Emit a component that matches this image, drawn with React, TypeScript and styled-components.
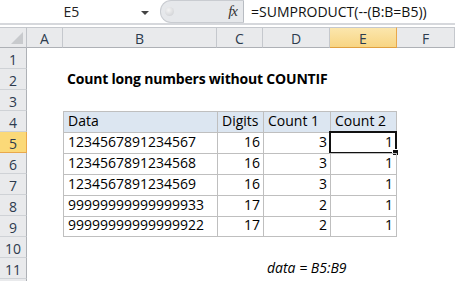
import React from 'react';
import styled, { createGlobalStyle } from 'styled-components';

const GlobalStyle = createGlobalStyle`
	html, body {
		margin: 0;
		padding: 0;
		background: #fff;
	}
	body {
		font-family: 'Open Sans', 'Liberation Sans', sans-serif;
		width: 455px;
		height: 281px;
		overflow: hidden;
	}
`;

const Window = styled.div`
	width: 455px;
	height: 281px;
	display: flex;
	flex-direction: column;
	overflow: hidden;
	background: #fff;
`;

const FormulaBar = styled.div`
	display: flex;
	height: 23px;
	border-bottom: 2px solid #d6d8dc;
	margin-bottom: 2px;
	flex-shrink: 0;
`;

const NameBox = styled.div`
	width: 160px;
	display: flex;
	align-items: center;
	font-size: 14px;
	color: #222;
	padding-right: 4px;
	box-sizing: border-box;
`;

const NameText = styled.span`
	flex: 1;
	text-align: center;
	padding-left: 2px;
`;

const DropArrow = styled.span`
	width: 0;
	height: 0;
	border-left: 4px solid transparent;
	border-right: 4px solid transparent;
	border-top: 4px solid #444;
	margin-right: 7px;
	margin-top: 2px;
`;

const FxPanel = styled.div`
	width: 84px;
	display: flex;
	align-items: center;
	justify-content: space-between;
	background: #e6e8eb;
	border: 1px solid #c9ccd1;
	border-right-color: #b8bcc2;
	border-radius: 11px 0 0 11px;
	box-sizing: border-box;
	padding: 0 6px 0 4px;
`;

const Grip = styled.span`
	width: 9px;
	height: 9px;
	border-radius: 50%;
	background: radial-gradient(circle at 40% 35%, #f4f4f4, #c9cbcf);
`;

const Fx = styled.span`
	font-family: 'Liberation Serif', serif;
	font-style: italic;
	font-size: 15px;
	color: #333;
	letter-spacing: -1px;
`;

const FormulaInput = styled.div`
	flex: 1;
	display: flex;
	align-items: center;
	padding-left: 7px;
	font-size: 14px;
	color: #111;
	white-space: nowrap;
`;

const Sheet = styled.div`
	display: grid;
	grid-template-columns: 27px 36px 154px 46px 67px 67px 1fr;
	grid-auto-rows: 21px;
	font-size: 14px;
	color: #000;
`;

const Corner = styled.div`
	background: #e9eaec;
	border-top: 1px solid #c5c8cd;
	border-right: 1px solid #bfc2c7;
	border-bottom: 1px solid #aeb1b6;
	box-sizing: border-box;
	position: relative;
	overflow: hidden;

	&::after {
		content: '';
		position: absolute;
		right: 3px;
		bottom: 3px;
		width: 0;
		height: 0;
		border-left: 12px solid transparent;
		border-bottom: 12px solid #c8cacd;
	}
`;

const ColHeader = styled.div<{ $active?: boolean }>`
	display: flex;
	align-items: center;
	justify-content: center;
	box-sizing: border-box;
	border-top: 1px solid #c5c8cd;
	border-right: 1px solid ${(p) => (p.$active ? '#e9a84c' : '#c5c8cd')};
	border-bottom: 1px solid ${(p) => (p.$active ? '#e0a040' : '#aeb1b6')};
	background: ${(p) => (p.$active ? 'linear-gradient(#fbe6ad, #f8d583)' : '#e9eaec')};
	color: #2d3b4e;
	font-size: 14px;
	padding-top: 2px;
`;

const RowHeader = styled.div<{ $active?: boolean }>`
	display: flex;
	align-items: center;
	justify-content: center;
	box-sizing: border-box;
	border-right: 1px solid ${(p) => (p.$active ? '#e9a84c' : '#aeb1b6')};
	border-bottom: 1px solid ${(p) => (p.$active ? '#e9a84c' : '#cfd2d6')};
	background: ${(p) => (p.$active ? '#fbd978' : '#e9eaec')};
	color: #2d3b4e;
	font-size: 14px;
	padding-top: 2px;
`;

const Cell = styled.div<{
	$align?: 'left' | 'right';
	$bold?: boolean;
	$italic?: boolean;
	$head?: boolean;
	$boxed?: boolean;
	$last?: boolean;
	$end?: boolean;
}>`
	position: relative;
	box-sizing: border-box;
	display: flex;
	align-items: flex-end;
	justify-content: ${(p) => (p.$align === 'right' ? 'flex-end' : 'flex-start')};
	padding: 0 3px 2px 4px;
	white-space: nowrap;
	overflow: visible;
	font-weight: ${(p) => (p.$bold ? 700 : 400)};
	font-style: ${(p) => (p.$italic ? 'italic' : 'normal')};
	letter-spacing: ${(p) => (p.$bold ? '-0.2px' : 'normal')};
	background: ${(p) => (p.$head ? '#dce6f1' : 'transparent')};
	${(p) =>
		p.$boxed
			? `border-left: 1px solid #bfbfbf; border-top: 1px solid #bfbfbf;`
			: ''}
	${(p) => (p.$last ? 'border-bottom: 1px solid #bfbfbf;' : '')}
	${(p) => (p.$end ? 'border-right: 1px solid #bfbfbf;' : '')}
`;

const Selection = styled.div`
	position: absolute;
	left: -2px;
	top: -2px;
	right: -1px;
	bottom: -1px;
	border: 2px solid #111;
	pointer-events: none;

	&::after {
		content: '';
		position: absolute;
		right: -4px;
		bottom: -4px;
		width: 5px;
		height: 5px;
		background: #111;
		border: 1px solid #fff;
	}
`;

const cols = ['A', 'B', 'C', 'D', 'E', 'F'];

const rows = [
	['1234567891234567', '16', '3', '1'],
	['1234567891234568', '16', '3', '1'],
	['1234567891234569', '16', '3', '1'],
	['99999999999999933', '17', '2', '1'],
	['99999999999999922', '17', '2', '1'],
];

const App: React.FC = () => {
	const blankRow = (n: number, label: React.ReactNode = n) => (
		<React.Fragment key={`r${n}`}>
			<RowHeader>{label}</RowHeader>
			{cols.map((c) => (
				<Cell key={c} />
			))}
		</React.Fragment>
	);

	return (
		<Window>
			<GlobalStyle />
			<FormulaBar>
				<NameBox>
					<NameText>E5</NameText>
					<DropArrow />
				</NameBox>
				<FxPanel>
					<Grip />
					<Fx>fx</Fx>
				</FxPanel>
				<FormulaInput>=SUMPRODUCT(--(B:B=B5))</FormulaInput>
			</FormulaBar>
			<Sheet>
				<Corner />
				{cols.map((c) => (
					<ColHeader key={c} $active={c === 'E'}>
						{c}
					</ColHeader>
				))}

				{blankRow(1)}

				<RowHeader>2</RowHeader>
				<Cell />
				<Cell $bold>Count long numbers without COUNTIF</Cell>
				<Cell />
				<Cell />
				<Cell />
				<Cell />

				{blankRow(3)}

				<RowHeader>4</RowHeader>
				<Cell />
				<Cell $head $boxed>Data</Cell>
				<Cell $head $boxed>Digits</Cell>
				<Cell $head $boxed>Count 1</Cell>
				<Cell $head $boxed $end>Count 2</Cell>
				<Cell />

				{rows.map((r, i) => {
					const n = i + 5;
					const last = i === rows.length - 1;
					return (
						<React.Fragment key={n}>
							<RowHeader $active={n === 5}>{n}</RowHeader>
							<Cell />
							<Cell $boxed $last={last}>{r[0]}</Cell>
							<Cell $boxed $last={last} $align='right'>{r[1]}</Cell>
							<Cell $boxed $last={last} $align='right'>{r[2]}</Cell>
							<Cell $boxed $last={last} $end $align='right'>
								{r[3]}
								{n === 5 && <Selection />}
							</Cell>
							<Cell />
						</React.Fragment>
					);
				})}

				{blankRow(10)}

				<RowHeader>11</RowHeader>
				<Cell />
				<Cell />
				<Cell />
				<Cell $italic>data = B5:B9</Cell>
				<Cell />
				<Cell />

				{blankRow(12, null)}
			</Sheet>
		</Window>
	);
};

export default App;
